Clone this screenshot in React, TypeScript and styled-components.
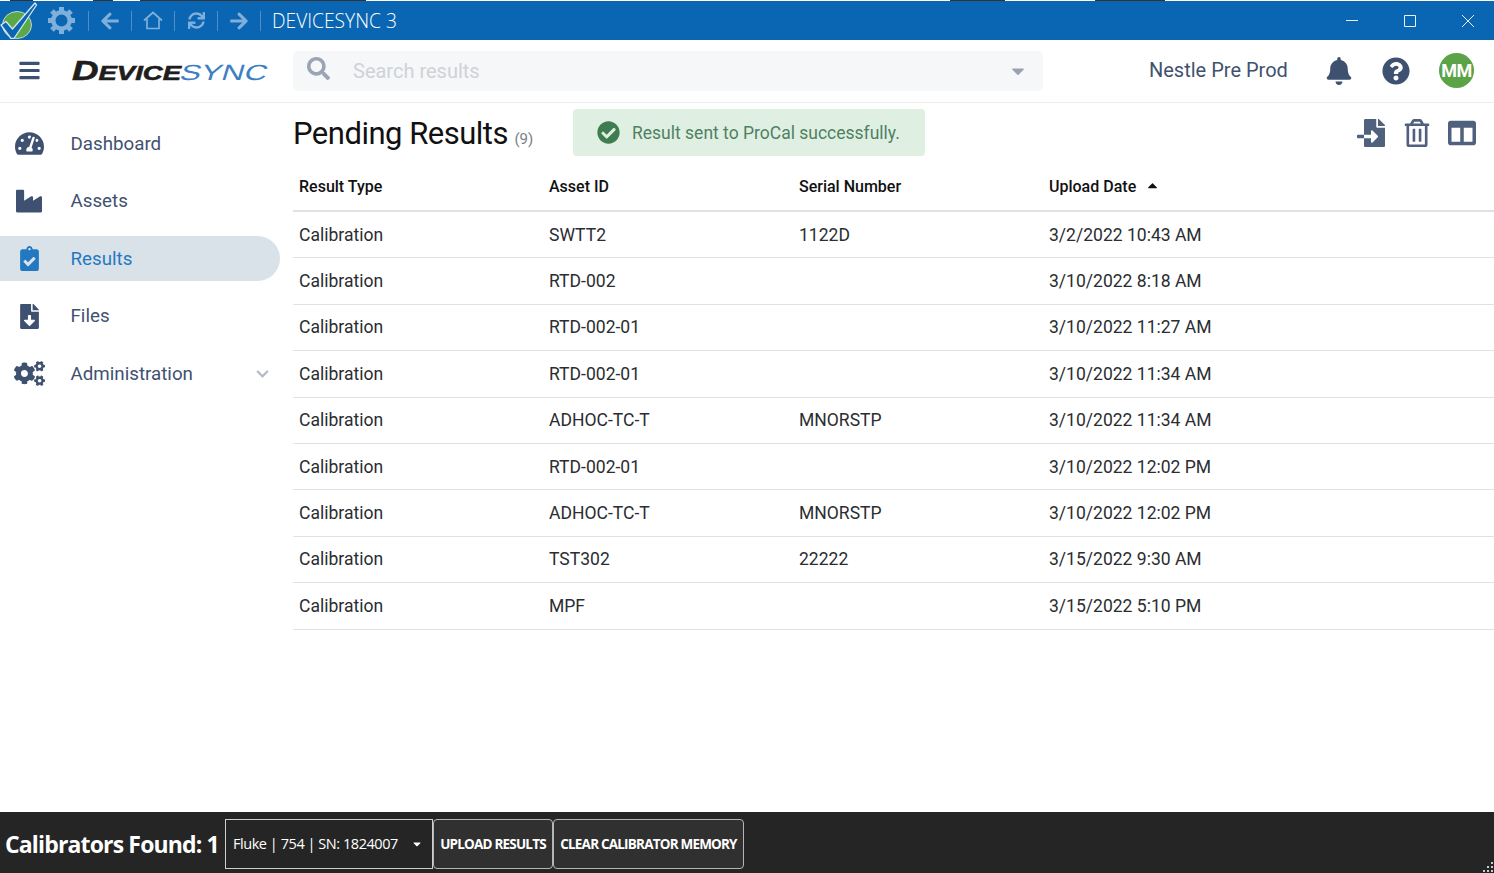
import React from "react";
import styled, { createGlobalStyle } from "styled-components";
import {
  FaArrowLeft, FaArrowRight, FaBars, FaBell, FaCaretDown, FaCaretUp, FaCheckCircle, FaChevronDown,
  FaClipboardCheck, FaCogs, FaColumns, FaFileDownload, FaFileImport, FaIndustry,
  FaQuestionCircle, FaRegTrashAlt, FaSearch, FaSync, FaTachometerAlt,
} from "react-icons/fa";

const Global = createGlobalStyle`
  html, body { margin: 0; padding: 0; background: #fff; overflow: hidden; }
  * { box-sizing: border-box; }
`;

const Page = styled.div`
  width: 1494px;
  height: 873px;
  display: flex;
  flex-direction: column;
  font-family: Roboto, "Liberation Sans", sans-serif;
  color: #212529;
  overflow: hidden;
`;

const TopStrip = styled.div`
  height: 1px;
  flex: none;
  display: flex;
  padding-left: 10px;
  background: #fff;
`;
const StripMark = styled.span<{ $w: number; $ml?: number }>`
  width: ${(p) => p.$w}px;
  margin-left: ${(p) => p.$ml ?? 0}px;
  background: #333;
`;

const TitleBar = styled.div`
  height: 39px;
  flex: none;
  background: #0a66b2;
  display: flex;
  align-items: center;
  position: relative;
`;
const AppMark = styled.svg`
  width: 38px;
  height: 39px;
  flex: none;
  margin-right: 9px;
  margin-top: -2px;
`;
const BarButton = styled.span<{ $w?: number }>`
  width: ${(p) => p.$w ?? 43}px;
  height: 20px;
  display: flex;
  align-items: center;
  justify-content: center;
  color: #7fb0db;
  border-right: 1px solid #4f8fc6;
  font-size: 20px;
  flex: none;
`;
const GearSlot = styled(BarButton)`
  width: 42px;
  justify-content: flex-start;
`;
const GearIcon = styled.svg`
  width: 29px;
  height: 29px;
  flex: none;
`;
const BarTitle = styled.span`
  font-family: "Open Sans", sans-serif;
  font-size: 19.2px;
  font-weight: 300;
  color: #fff;
  margin-left: 11px;
  line-height: 20px;
  padding-top: 1px;
`;
const WindowControls = styled.div`
  margin-left: auto;
  margin-right: 20px;
  display: flex;
  align-items: center;
  gap: 46px;
`;
const WinIcon = styled.svg`
  width: 12px;
  height: 12px;
  display: block;
  stroke: #e8f1f8;
  stroke-width: 1;
  fill: none;
`;

const Header = styled.header`
  height: 63px;
  flex: none;
  display: flex;
  align-items: center;
  border-bottom: 1px solid #ececec;
  color: #3f5170;
  padding-bottom: 1px;
`;
const Burger = styled.span`
  width: 72px;
  padding-left: 18px;
  font-size: 23px;
  display: flex;
  color: #3f5170;
  flex: none;
`;
const Logo = styled.div`
  width: 221px;
  flex: none;
  height: 30px;
  display: flex;
  align-items: baseline;
  font-family: "Liberation Sans", sans-serif;
  font-style: italic;
  white-space: nowrap;
  line-height: 30px;
  margin-top: 1px;
`;
const LogoDark = styled.span`
  color: #1f1d1e;
  font-weight: 700;
  font-size: 21px;
  display: inline-block;
  transform: scaleX(1.31);
  transform-origin: left bottom;
  width: 104px;
  -webkit-text-stroke: 0.6px #1f1d1e;
`;
const LogoInitial = styled.span`
  font-size: 28px;
`;
const LogoBlue = styled.span`
  color: #3b80c2;
  font-weight: 400;
  font-size: 22px;
  font-style: normal;
  display: inline-block;
  transform: scaleX(1.42) skewX(-12deg);
  transform-origin: left bottom;
`;
const SearchBox = styled.div`
  width: 750px;
  height: 40px;
  background: #f6f7f9;
  border-radius: 5px;
  display: flex;
  align-items: center;
  padding: 0 15px 0 14px;
  flex: none;
`;
const SearchGlyph = styled.span`
  font-size: 23px;
  color: #9aa4b4;
  display: flex;
  margin-top: -5px;
  width: 46px;
`;
const SearchText = styled.span`
  font-size: 20px;
  color: #cfd2d6;
  flex: 1;
  padding-top: 1px;
`;
const SearchCaret = styled.span`
  font-size: 20px;
  color: #99a2b0;
  display: flex;
`;
const Org = styled.span`
  font-size: 20px;
  margin-left: 106px;
  width: 176px;
  flex: none;
  color: #3f5170;
  margin-top: -2px;
`;
const HeadIcon = styled.span<{ $w: number }>`
  width: ${(p) => p.$w}px;
  flex: none;
  display: flex;
  font-size: 28px;
  color: #3f5170;
`;
const Avatar = styled.span`
  width: 35px;
  height: 35px;
  border-radius: 50%;
  background: #5aa346;
  color: #fff;
  font-weight: 700;
  font-size: 18px;
  letter-spacing: -0.5px;
  display: flex;
  align-items: center;
  justify-content: center;
  flex: none;
`;

const Body = styled.div`
  flex: 1;
  display: flex;
  min-height: 0;
`;
const Sidebar = styled.nav`
  width: 293px;
  flex: none;
  padding-top: 18px;
  padding-right: 13px;
  display: flex;
  flex-direction: column;
  gap: 12.5px;
`;
const NavItem = styled.div<{ $active?: boolean }>`
  height: 45px;
  display: flex;
  align-items: center;
  border-radius: 0 23px 23px 0;
  background: ${(p) => (p.$active ? "#dae2e9" : "transparent")};
  color: ${(p) => (p.$active ? "#2379c1" : "#3f5170")};
  font-size: 18.75px;
`;
const NavIcon = styled.span<{ $size: number }>`
  width: 70.5px;
  flex: none;
  padding-right: 12px;
  display: flex;
  justify-content: center;
  font-size: ${(p) => p.$size}px;
`;
const NavLabel = styled.span`
  flex: 1;
`;
const NavChevron = styled.span`
  width: 13px;
  margin-right: 11px;
  font-size: 14px;
  color: #b3bac6;
  display: flex;
`;

const Main = styled.main`
  flex: 1;
  min-width: 0;
  display: flex;
  flex-direction: column;
`;
const TitleRow = styled.div`
  height: 62px;
  display: flex;
  align-items: center;
  padding-bottom: 3px;
  flex: none;
`;
const Title = styled.h1`
  margin: 0;
  padding-top: 2px;
  font-size: 31px;
  font-weight: 400;
  letter-spacing: -0.5px;
  color: #111;
  width: 280px;
  display: flex;
  align-items: baseline;
  gap: 6.5px;
`;
const Count = styled.small`
  font-size: 15px;
  letter-spacing: 0;
  color: #7a7f88;
`;
const Alert = styled.div`
  width: 352px;
  height: 47px;
  border-radius: 4px;
  background: #dff0e2;
  color: #4f8062;
  display: flex;
  align-items: center;
  padding-left: 24px;
  gap: 12px;
  font-size: 17.5px;
`;
const AlertIcon = styled.span`
  display: flex;
  font-size: 23px;
  color: #3f7d50;
`;
const Actions = styled.div`
  margin-left: auto;
  display: flex;
  align-items: center;
  color: #4f617d;
  margin-right: 18px;
  gap: 17.5px;
  font-size: 28px;
`;
const ActionIcon = styled.span`
  display: flex;
`;
const Grid = styled.div`
  display: flex;
  flex-direction: column;
`;
const HeadRow = styled.div`
  display: grid;
  grid-template-columns: 250px 250px 250px 1fr;
  height: 47.1px;
  align-items: center;
  padding: 0 0 2px 6px;
  border-bottom: 2px solid #dee2e6;
  font-size: 16px;
  font-weight: 500;
  color: #111;
`;
const HeadCell = styled.span`
  display: flex;
  align-items: center;
  gap: 9px;
`;
const SortMark = styled.span`
  display: flex;
  font-size: 15px;
  margin-top: -3px;
`;
const Row = styled.div`
  display: grid;
  grid-template-columns: 250px 250px 250px 1fr;
  height: 46.4px;
  align-items: center;
  padding: 0 0 0.4px 6px;
  border-bottom: 1px solid #dee2e6;
  font-size: 17.55px;
  color: #2a2d31;
`;

const Footer = styled.footer`
  height: 61px;
  flex: none;
  background: #252525;
  display: flex;
  align-items: center;
  padding: 2px 0 0 5px;
  font-family: "Open Sans", sans-serif;
  color: #fff;
  position: relative;
`;
const Found = styled.span`
  font-size: 23px;
  font-weight: 700;
  letter-spacing: -0.85px;
  width: 220px;
  flex: none;
  white-space: nowrap;
  padding-top: 1px;
`;
const Picker = styled.div`
  width: 208px;
  height: 50px;
  border: 1px solid #cfcfcf;
  background: #252525;
  display: flex;
  align-items: center;
  padding: 0 9px 0 7px;
  font-size: 14.5px;
  letter-spacing: -0.45px;
  flex: none;
`;
const PickerText = styled.span`
  flex: 1;
`;
const PickerCaret = styled.span`
  font-size: 12px;
  display: flex;
`;
const FootButton = styled.button<{ $w: number }>`
  width: ${(p) => p.$w}px;
  height: 50px;
  flex: none;
  background: #303030;
  border: 1px solid #b5b5b5;
  border-radius: 4px;
  color: #fff;
  font-family: "Open Sans", sans-serif;
  font-weight: 700;
  font-size: 13.5px;
  letter-spacing: -0.8px;
  padding: 0;
  white-space: nowrap;
`;
const Grip = styled.svg`
  position: absolute;
  right: 0;
  bottom: 0;
  width: 12px;
  height: 12px;
`;

const rows = [
  ["SWTT2", "1122D", "3/2/2022 10:43 AM"],
  ["RTD-002", "", "3/10/2022 8:18 AM"],
  ["RTD-002-01", "", "3/10/2022 11:27 AM"],
  ["RTD-002-01", "", "3/10/2022 11:34 AM"],
  ["ADHOC-TC-T", "MNORSTP", "3/10/2022 11:34 AM"],
  ["RTD-002-01", "", "3/10/2022 12:02 PM"],
  ["ADHOC-TC-T", "MNORSTP", "3/10/2022 12:02 PM"],
  ["TST302", "22222", "3/15/2022 9:30 AM"],
  ["MPF", "", "3/15/2022 5:10 PM"],
];

const HomeGlyph = () => (
  <svg width="20" height="19" viewBox="0 0 20 19" fill="none" stroke="#7fb0db" strokeWidth="1.7">
    <path d="M1 9.5 10 1.5l9 8M4 8v9.5h12V8" />
  </svg>
);

const gearTeeth = [0, 45, 90, 135, 180, 225, 270, 315];

export default function App() {
  return (
    <Page>
      <Global />
      <TopStrip>
        <StripMark $w={23} />
        <StripMark $w={20} $ml={60} />
        <StripMark $w={226} $ml={27} />
        <StripMark $w={55} $ml={584} />
        <StripMark $w={70} $ml={90} />
      </TopStrip>
      <TitleBar>
        <AppMark viewBox="0 0 38 39">
          <ellipse cx="17" cy="25" rx="14.5" ry="13.5" fill="#5aa846" stroke="#bcd3e6" strokeWidth="1" />
          <path d="M1 25 L6 21.5 L12.5 29 L35 3 L36.5 5 L14 38.5 L11 38.5 Z" fill="#0a66b2" stroke="#d8e6f2" strokeWidth="1.3" strokeLinejoin="round" />
        </AppMark>
        <GearSlot>
          <GearIcon viewBox="0 0 29 29">
            <circle cx="14.5" cy="14.5" r="8.2" fill="none" stroke="#7fb0db" strokeWidth="4.4" />
            {gearTeeth.map((a) => (
              <rect key={a} x="12" y="1" width="5" height="5" fill="#7fb0db" transform={`rotate(${a} 14.5 14.5)`} />
            ))}
          </GearIcon>
        </GearSlot>
        <BarButton><FaArrowLeft /></BarButton>
        <BarButton><HomeGlyph /></BarButton>
        <BarButton><FaSync style={{ fontSize: 17 }} /></BarButton>
        <BarButton><FaArrowRight /></BarButton>
        <BarTitle>DEVICESYNC 3</BarTitle>
        <WindowControls>
          <WinIcon viewBox="0 0 12 12"><path d="M0 5.5h12" /></WinIcon>
          <WinIcon viewBox="0 0 12 12"><path d="M.5.5h11v11H.5z" /></WinIcon>
          <WinIcon viewBox="0 0 12 12"><path d="M0 0l12 12M12 0L0 12" /></WinIcon>
        </WindowControls>
      </TitleBar>
      <Header>
        <Burger><FaBars /></Burger>
        <Logo>
          <LogoDark><LogoInitial>D</LogoInitial>EVICE</LogoDark>
          <LogoBlue>SYNC</LogoBlue>
        </Logo>
        <SearchBox>
          <SearchGlyph><FaSearch /></SearchGlyph>
          <SearchText>Search results</SearchText>
          <SearchCaret><FaCaretDown /></SearchCaret>
        </SearchBox>
        <Org>Nestle Pre Prod</Org>
        <HeadIcon $w={57}><FaBell /></HeadIcon>
        <HeadIcon $w={57}><FaQuestionCircle /></HeadIcon>
        <Avatar>MM</Avatar>
      </Header>
      <Body>
        <Sidebar>
          <NavItem>
            <NavIcon $size={29}><FaTachometerAlt /></NavIcon>
            <NavLabel>Dashboard</NavLabel>
          </NavItem>
          <NavItem>
            <NavIcon $size={26}><FaIndustry /></NavIcon>
            <NavLabel>Assets</NavLabel>
          </NavItem>
          <NavItem $active>
            <NavIcon $size={25}><FaClipboardCheck /></NavIcon>
            <NavLabel>Results</NavLabel>
          </NavItem>
          <NavItem>
            <NavIcon $size={25}><FaFileDownload /></NavIcon>
            <NavLabel>Files</NavLabel>
          </NavItem>
          <NavItem>
            <NavIcon $size={31}><FaCogs /></NavIcon>
            <NavLabel>Administration</NavLabel>
            <NavChevron><FaChevronDown /></NavChevron>
          </NavItem>
        </Sidebar>
        <Main>
          <TitleRow>
            <Title>Pending Results <Count>(9)</Count></Title>
            <Alert>
              <AlertIcon><FaCheckCircle /></AlertIcon>
              Result sent to ProCal successfully.
            </Alert>
            <Actions>
              <ActionIcon><FaFileImport /></ActionIcon>
              <ActionIcon><FaRegTrashAlt /></ActionIcon>
              <ActionIcon><FaColumns /></ActionIcon>
            </Actions>
          </TitleRow>
          <Grid>
            <HeadRow>
              <HeadCell>Result Type</HeadCell>
              <HeadCell>Asset ID</HeadCell>
              <HeadCell>Serial Number</HeadCell>
              <HeadCell>Upload Date <SortMark><FaCaretUp /></SortMark></HeadCell>
            </HeadRow>
            {rows.map((r, i) => (
              <Row key={i}>
                <span>Calibration</span>
                <span>{r[0]}</span>
                <span>{r[1]}</span>
                <span>{r[2]}</span>
              </Row>
            ))}
          </Grid>
        </Main>
      </Body>
      <Footer>
        <Found>Calibrators Found: 1</Found>
        <Picker>
          <PickerText>Fluke | 754 | SN: 1824007</PickerText>
          <PickerCaret><FaCaretDown /></PickerCaret>
        </Picker>
        <FootButton $w={120}>UPLOAD RESULTS</FootButton>
        <FootButton $w={191}>CLEAR CALIBRATOR MEMORY</FootButton>
        <Grip viewBox="0 0 12 12" fill="#c8ccd2">
          <path d="M9 1h2v2H9zM5 5h2v2H5zM9 5h2v2H9zM1 9h2v2H1zM5 9h2v2H5zM9 9h2v2H9z" />
        </Grip>
      </Footer>
    </Page>
  );
}
